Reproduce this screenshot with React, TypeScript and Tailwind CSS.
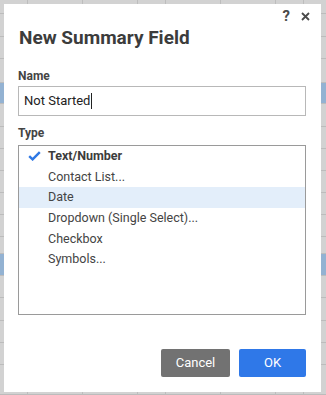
import React from "react";

const ROWS: { h: string; blue?: boolean }[] = [
  { h: "h-[14px]" },
  { h: "h-[23px]" },
  { h: "h-[22px]" },
  { h: "h-[24px]" },
  { h: "h-[21px]", blue: true },
  { h: "h-[23px]" },
  { h: "h-[22px]" },
  { h: "h-[22px]" },
  { h: "h-[22px]" },
  { h: "h-[22px]" },
  { h: "h-[22px]" },
  { h: "h-[17px]" },
  { h: "h-[22px]", blue: true },
  { h: "h-[22px]" },
  { h: "h-[23px]" },
  { h: "h-[22px]" },
  { h: "h-[22px]" },
  { h: "h-[30px]" },
];

const TYPES = [
  "Text/Number",
  "Contact List...",
  "Date",
  "Dropdown (Single Select)...",
  "Checkbox",
  "Symbols...",
];

function Check() {
  return (
    <svg width="13" height="10" viewBox="0 0 13 10" className="shrink-0">
      <path d="M1.2 5.2 L4.6 8.4 L11.8 1.2" fill="none" stroke="#2f78e4" strokeWidth="2.4" />
    </svg>
  );
}

function CloseIcon() {
  return (
    <svg width="9" height="9" viewBox="0 0 9 9">
      <path d="M1 1 L8 8 M8 1 L1 8" stroke="#4a4a4a" strokeWidth="1.8" />
    </svg>
  );
}

export default function App() {
  return (
    <div className="relative w-[326px] h-[395px] overflow-hidden bg-[#d2d2d2] font-['Roboto',sans-serif]">
      {/* spreadsheet behind the dialog */}
      <div className="flex flex-col bg-[repeating-linear-gradient(90deg,transparent_0_27px,#bdbdbd_27px_27.6px)]">
        {ROWS.map((r, i) => (
          <div
            key={i}
            className={`${r.h} border-b border-[#bcbcbc] ${r.blue ? "bg-[#93b2d2]" : ""}`}
          />
        ))}
      </div>

      {/* dialog */}
      <div className="absolute left-[4px] top-[4px] w-[317px] h-[388px] bg-white flex flex-col pl-[14px] pr-[15px]">
        <div className="h-[22px] flex items-center justify-end gap-[11px] -mr-[4px] pt-[2px]">
          <span className="text-[15px] font-bold text-[#4a4a4a] leading-none">?</span>
          <CloseIcon />
        </div>

        <h1 className="text-[19px] leading-[24px] font-bold text-[#3c3c3c] pl-[1px]">
          New Summary Field
        </h1>

        <label className="mt-[18px] text-[12px] leading-[16px] font-bold text-[#444]">Name</label>
        <div className="mt-[2px] h-[30px] border border-[#b8b8b8] flex items-center pl-[5px] text-[13px] text-[#222]">
          Not Started
          <span className="w-px h-[16px] bg-[#222] ml-[1px]" />
        </div>

        <label className="mt-[9px] text-[12px] leading-[16px] font-bold text-[#444]">Type</label>
        <div className="mt-[4px] h-[170px] border border-[#9a9a9a] flex flex-col">
          {TYPES.map((t, i) => (
            <div
              key={t}
              className={`h-[20.7px] flex items-center text-[12.5px] text-[#444] ${
                i === 2 ? "bg-[#e3eefa]" : ""
              }`}
            >
              <div className="w-[29px] flex justify-center pl-[1px]">{i === 0 && <Check />}</div>
              <span className={i === 0 ? "font-bold text-[#3c3c3c]" : ""}>{t}</span>
            </div>
          ))}
        </div>

        <div className="mt-[34px] flex justify-end gap-[9px]">
          <button className="w-[69px] h-[28px] rounded-[2px] bg-[#727272] text-white text-[13px]">
            Cancel
          </button>
          <button className="w-[67px] h-[28px] rounded-[2px] bg-[#2f78e8] text-white text-[13px]">
            OK
          </button>
        </div>
      </div>
    </div>
  );
}
